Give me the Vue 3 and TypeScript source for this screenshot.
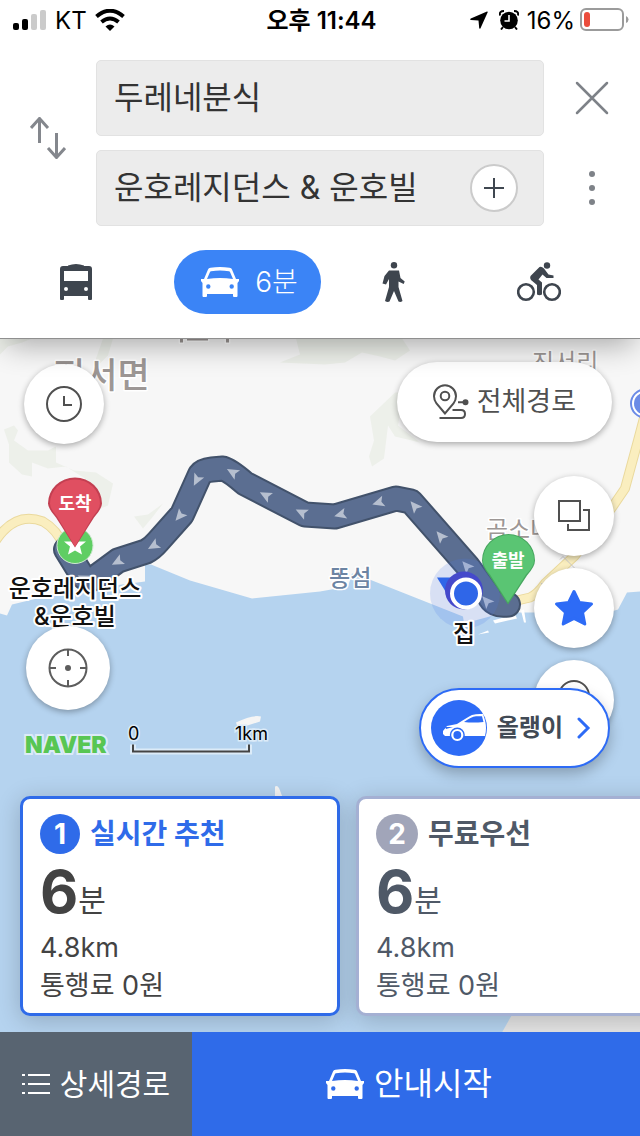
<script setup lang="ts">
import { ref } from 'vue'

interface RouteOption {
  id: number
  title: string
  minutes: number
  distance: string
  toll: string
}

interface Arrow {
  x: number
  y: number
  angle: number
}

const origin = ref('두레네분식')
const destination = ref('운호레지던스 & 운호빌')
const selected = ref(1)

const options: RouteOption[] = [
  { id: 1, title: '실시간 추천', minutes: 6, distance: '4.8km', toll: '통행료 0원' },
  { id: 2, title: '무료우선', minutes: 6, distance: '4.8km', toll: '통행료 0원' },
]

const routeLine =
  'M66 549L82 575Q90 583 99 574L118 560L146 551Q152 548 158 541L182 514L200 474Q203 470 212 469L223 468Q230 470 245 483L305 514L335 516L396 498L411 501L468 566L489 595Q493 606 508 604'

const roadLine =
  'M-6 543Q14 510 43 521Q57 529 64 546M500 604L530 597Q537 594 545 583L575 555L612 507L625 488L638 440L646 410'

const arrows: Arrow[] = [
  { x: 487, y: 601, angle: 228 },
  { x: 467, y: 566, angle: 228 },
  { x: 441, y: 536, angle: 230 },
  { x: 415, y: 506, angle: 230 },
  { x: 379, y: 502, angle: 163 },
  { x: 341, y: 514, angle: 165 },
  { x: 302, y: 512, angle: 206 },
  { x: 266, y: 495, angle: 208 },
  { x: 233, y: 472, angle: 210 },
  { x: 197, y: 479, angle: 117 },
  { x: 180, y: 515, angle: 130 },
  { x: 154, y: 545, angle: 150 },
  { x: 118, y: 561, angle: 152 },
  { x: 84, y: 578, angle: 205 },
]
</script>

<template>
  <div class="app">
    <header class="top">
      <div class="status">
        <div class="status-side">
          <svg width="34" height="22" viewBox="0 0 34 22" aria-hidden="true">
            <rect x="0" y="14" width="6" height="7" rx="2" />
            <rect x="9" y="10" width="6" height="11" rx="2" />
            <rect x="18" y="5" width="6" height="16" rx="2" fill="#cbcbcb" />
            <rect x="27" y="1" width="6" height="20" rx="2" fill="#cbcbcb" />
          </svg>
          <span>KT</span>
          <svg width="30" height="22" viewBox="0 0 30 22" aria-hidden="true">
            <g fill="none" stroke="#000" stroke-width="4">
              <path d="M1.500 7.500Q15 -4 28.500 7.500" />
              <path d="M6.500 13Q15 6 23.500 13" />
            </g>
            <path d="M10.500 17.500Q15 13.500 19.500 17.500L15 22Z" />
          </svg>
        </div>
        <strong>오후 11:44</strong>
        <div class="status-side right">
          <svg width="18" height="18" viewBox="0 0 18 18" aria-hidden="true">
            <path d="M17 .5Q18 .3 17.700 1.300L10.500 17.300Q9.600 18.500 9.200 17L8.500 9.500L1 9Q-.6 8.600.8 7.600Z" />
          </svg>
          <svg class="alarm" width="20" height="20" viewBox="0 0 20 20" aria-hidden="true">
            <circle cx="10" cy="10.500" r="8.800" />
            <path d="M1 5.500Q0 1 5 1M19 5.500Q20 1 15 1" fill="none" stroke="#000" stroke-width="2" />
            <path d="M4 17L2 19.500M16 17L18 19.500" stroke="#000" stroke-width="2" />
            <path d="M10 5V11H5.500" fill="none" stroke="#fff" stroke-width="1.600" />
          </svg>
          <span>16%</span>
          <svg width="50" height="24" viewBox="0 0 50 24" aria-hidden="true">
            <rect x="1" y="1" width="42" height="21" rx="5" fill="none" stroke="#9b9b9b" stroke-width="2" />
            <rect x="4" y="4" width="6" height="15" rx="3" fill="#eb4d3d" />
            <path d="M46 8Q48.500 9 48.500 11.500T46 15Z" fill="#9b9b9b" />
          </svg>
        </div>
      </div>

      <form class="search" @submit.prevent>
        <button class="bare swap" type="button" aria-label="출발지와 도착지 바꾸기">
          <svg width="36" height="42" viewBox="0 0 36 42" aria-hidden="true">
            <path d="M9.500 26V2M1 11L9.500 1.500L18 11M26.500 16V40M18 31L26.500 40.500L35 31" fill="none" stroke="#84878d" stroke-width="3" />
          </svg>
        </button>
        <div class="fields">
          <div class="field">
            <input v-model="origin" type="text" aria-label="출발지" />
          </div>
          <div class="field">
            <input v-model="destination" type="text" aria-label="도착지" />
            <button class="add" type="button" aria-label="경유지 추가">
              <svg width="20" height="20" viewBox="0 0 20 20" aria-hidden="true">
                <path d="M10 0V20M0 10H20" stroke="#3f4750" stroke-width="2" />
              </svg>
            </button>
          </div>
        </div>
        <div class="actions">
          <button class="bare" type="button" aria-label="닫기">
            <svg width="34" height="34" viewBox="0 0 34 34" aria-hidden="true">
              <path d="M2 2L32 32M32 2L2 32" stroke="#7e8288" stroke-width="2.500" stroke-linecap="round" />
            </svg>
          </button>
          <button class="bare" type="button" aria-label="더보기">
            <svg width="34" height="34" viewBox="0 0 34 34" fill="#7e8288" aria-hidden="true">
              <circle cx="17" cy="3" r="3" /><circle cx="17" cy="17" r="3" /><circle cx="17" cy="31" r="3" />
            </svg>
          </button>
        </div>
      </form>

      <nav class="modes" aria-label="이동 수단">
        <button class="bare" type="button" aria-label="대중교통">
          <svg width="32" height="36" viewBox="0 0 32 36" aria-hidden="true">
            <path fill="#3e454e" fill-rule="evenodd" d="M8 1.500Q16 -1.500 24 1.500V2H29Q32 2 32 5V35Q32 36 31 36H29Q28 36 28 35V32H4V35Q4 36 3 36H1Q0 36 0 35V5Q0 2 3 2H8ZM4 7V17H28V7ZM6 23a2 2 0 1 0 0 4 2 2 0 0 0 0-4ZM26 23a2 2 0 1 0 0 4 2 2 0 0 0 0-4Z" />
          </svg>
        </button>
        <button class="bare mode-active" type="button" aria-pressed="true">
          <svg width="38" height="30" viewBox="0 0 38 30" aria-hidden="true">
            <path fill="#fff" fill-rule="evenodd" d="M7 2.500Q7.500 1 9.500.8Q19 -.8 28.500.8Q30.500 1 31 2.500L35 12H38V14L36.500 16V29Q36.500 30 35.500 30H33Q32 30 32 29V27H6V29Q6 30 5 30H2.500Q1.500 30 1.500 29V16L0 14V12H3ZM10 4.200Q9.300 4.400 9 5L6 12Q19 10 32 12L29 5Q28.700 4.400 28 4.200Q19 2.800 10 4.200ZM7.300 17.300a2.200 2.200 0 1 0 0 4.400 2.200 2.200 0 0 0 0-4.400ZM30.700 17.300a2.200 2.200 0 1 0 0 4.400 2.200 2.200 0 0 0 0-4.400Z" />
          </svg>
          <span>6분</span>
        </button>
        <button class="bare" type="button" aria-label="도보">
          <svg width="24" height="40" viewBox="0 0 24 40" fill="#3e454e" aria-hidden="true">
            <circle cx="12" cy="3.200" r="3.200" />
            <path d="M7 8.500H17L18.500 16L22.700 19.500L21.700 22L16.500 19.500V25L20.500 39Q18.500 40.500 16.500 39.500L12 29L7.500 39.500Q5.500 40.500 3 39L7 25V17L4 22.500L.5 21.500L2.500 14Z" />
          </svg>
        </button>
        <button class="bare" type="button" aria-label="자전거">
          <svg width="44" height="40" viewBox="0 0 44 40" fill="#3e454e" aria-hidden="true">
            <circle cx="9" cy="30" r="7.800" fill="none" stroke="#3e454e" stroke-width="2.600" />
            <circle cx="35" cy="30" r="7.800" fill="none" stroke="#3e454e" stroke-width="2.600" />
            <circle cx="30" cy="3.500" r="3.200" />
            <path d="M22.500 5Q24.500 4 27 6.500L31.500 12.500L36.500 13.500V16H29.500L25.500 12.500L21.500 17.500L25 20.500V32.500Q22.500 34 20 32.500V23L14 18Q12.500 16 13.500 14Z" />
          </svg>
        </button>
      </nav>
    </header>

    <main class="map">
      <svg class="canvas" viewBox="0 338 640 694" preserveAspectRatio="xMidYMid slice" role="img" aria-label="경로 지도">
        <rect y="338" width="640" height="694" fill="#f7f7f7" />
        <g fill="#edf0ea">
          <path d="M0 338H32L22 342L8 346L0 354ZM103 338H113L108 355L97 366L96 358ZM280 362L300 354L296 338H402L410 350L395 360L380 356L362 352L345 362L325 364Z" />
          <path d="M4 429L14 425L18 430L14 440L28 450H48L56 446L56 462L74 470L96 472L113 483L108 505L96 510L85 478L66 466L48 468L32 462V476L22 474L9 462L9 444Z" />
          <path d="M134 516L148 514L163 503L153 516L143 528ZM370 416L395 392H404L398 425L420 442L395 436L388 425L384 458L372 466L369 456L374 440Z" />
        </g>
        <path fill="#b5d3ef" d="M0 613L7 615L12 604L62 592L145 581V564H151L190 580L252 598L320 591L348 586L352 573L362 576L463 616L464 623L486 617L504 612H608L618 609L627 592L640 591V1032H0Z" />
        <path fill="#e4e4e4" d="M520 1000H640V1032H502Z" />
        <path fill="#fff" d="M493 620L515 614L517 618L495 623ZM521 610L524 609L526 622H524ZM478 634L488 630L489 632Z" />
        <path fill="#f5f5f5" d="M236 722Q252 714 261 716L260 721L238 728ZM275 786Q278 784 280 790L283 798H275Z" />
        <g fill="none" stroke-linejoin="round">
          <path :d="roadLine" stroke="#ead99d" stroke-width="10" />
          <path :d="roadLine" stroke="#faeebf" stroke-width="8" />
        </g>
        <path d="M560 559L563 556L575 568M541 583L548 586" fill="none" stroke="#c9c9c9" stroke-width="1" />
        <circle cx="645" cy="403" r="14" fill="#fff" stroke="#6b8be6" stroke-width="2" />
        <circle cx="645" cy="403" r="11" fill="#6b8be6" />

        <g class="place">
          <path d="M180 338H183V342H180ZM187 338H208V340H187ZM226 338H229V342H226Z" />
          <text x="53" y="387" font-size="35">진서면</text>
          <text class="minor" x="532" y="370">진서리</text>
          <text class="minor" x="486" y="537">곰소나</text>
          <text class="island" x="329" y="585">똥섬</text>
        </g>

        <g fill="none" stroke-linejoin="round" stroke-linecap="round">
          <path :d="routeLine" stroke="#42526b" stroke-width="26" />
          <path :d="routeLine" stroke="#5b6e91" stroke-width="22" />
        </g>
        <path
          v-for="arrow in arrows"
          :key="`${arrow.x}-${arrow.y}`"
          d="M7 0L-5 5.500L-2.500 0L-5 -5.500Z"
          fill="#b6bfcf"
          :transform="`translate(${arrow.x} ${arrow.y}) rotate(${arrow.angle})`"
        />

        <circle cx="75" cy="545" r="18" fill="#5fce63" stroke="#cfe9d2" stroke-width="1" />
        <path d="M75 532L78 541L86 541L80 546L82 554L75 550L68 554L70 546L64 541L72 541Z" fill="#fff" />
        <path d="M75 547L56 517Q48 508 48 503A27 26 0 0 1 102 503Q102 508 94 517Z" fill="#c33f51" />
        <path d="M75 546L57 516Q50 508 50 503A25 24 0 0 1 100 503Q100 508 93 516Z" fill="#e04f61" />
        <text class="pin-label" x="75" y="509">도착</text>

        <circle cx="465" cy="593" r="35" fill="#4f7bea" fill-opacity=".18" />
        <path d="M437 577L462 577L448 595Z" fill="#2f66e8" />
        <circle cx="464" cy="590" r="19" fill="#4549cb" />
        <circle cx="466" cy="593" r="14" fill="#2f66e8" stroke="#fff" stroke-width="4" />
        <path d="M508 604L489 575Q482 566 482 560A26.500 26.500 0 0 1 535 560Q535 566 527 575Z" fill="#47a65f" />
        <path d="M508 602L490 574Q483 566 483 560A25 25 0 0 1 534 560Q534 566 526 574Z" fill="#5ac573" />
        <text class="pin-label" x="508" y="566">출발</text>

        <g class="place dark">
          <text x="75" y="596">운호레지던스</text>
          <text x="75" y="624">&amp;운호빌</text>
          <text x="464" y="641">집</text>
        </g>

        <text class="brand" x="25" y="752">NAVER</text>
        <g class="scale">
          <text x="128" y="739">0</text>
          <text x="235" y="739">1km</text>
        </g>
        <path d="M133 744V751H249V744" fill="none" stroke="#dcebf8" stroke-width="6" />
        <path d="M133 744V751H249V744" fill="none" stroke="#444" stroke-width="2" />
      </svg>

      <div class="controls">
        <div class="column">
          <button class="round" type="button" aria-label="출발 시간 설정">
            <svg width="36" height="36" viewBox="0 0 36 36" fill="none" stroke="#505050" stroke-width="2" aria-hidden="true">
              <circle cx="18" cy="18" r="17" /><path d="M18 10V19H26" />
            </svg>
          </button>
          <button class="round large" type="button" aria-label="현재 위치">
            <svg width="40" height="40" viewBox="0 0 40 40" aria-hidden="true">
              <circle cx="20" cy="20" r="18.500" fill="none" stroke="#5d5d5d" stroke-width="2" />
              <path d="M20 1V8M20 32V39M1 20H8M32 20H39" stroke="#5d5d5d" stroke-width="2" />
              <circle cx="20" cy="20" r="3" fill="#5d5d5d" />
            </svg>
          </button>
        </div>
        <div class="column end">
          <button class="overview" type="button">
            <svg width="36" height="36" viewBox="0 0 36 36" fill="none" stroke="#505050" stroke-width="2" aria-hidden="true">
              <path d="M12 29.500L3.500 19.500Q1 16 1 12.300A11 11 0 0 1 23 12.300Q23 16 20.500 19.500Z" />
              <circle cx="12" cy="12" r="4.300" />
              <path d="M19.500 26H28Q32 26 32 30T28 34H6.500M25 18.300H32" />
              <circle cx="32.500" cy="18.300" r="2" fill="#505050" />
            </svg>
            <span>전체경로</span>
          </button>
          <button class="round" type="button" aria-label="지도 레이어">
            <svg width="32" height="32" viewBox="0 0 32 32" fill="none" stroke="#505050" stroke-width="2" aria-hidden="true">
              <path d="M1 1H22V21H1ZM25 10H31V30H10V24" />
            </svg>
          </button>
          <button class="round" type="button" aria-label="즐겨찾기">
            <svg width="40" height="38" viewBox="0 0 40 38" aria-hidden="true">
              <path d="M20 2.500L25.300 13.500L37.500 15L28.500 23.300L30.800 35L20 29.300L9.200 35L11.500 23.300L2.500 15L14.700 13.500Z" fill="#2d6bf6" stroke="#2d6bf6" stroke-width="3" stroke-linejoin="round" />
            </svg>
          </button>
          <button class="round" type="button" aria-label="거리뷰">
            <svg width="40" height="40" viewBox="0 0 40 40" fill="none" stroke="#505050" stroke-width="2" aria-hidden="true">
              <circle cx="20" cy="16" r="15" />
            </svg>
          </button>
        </div>
      </div>

      <button class="vehicle" type="button">
        <svg width="56" height="56" viewBox="0 0 56 56" aria-hidden="true">
          <circle cx="28" cy="28" r="28" fill="#2d6bf6" />
          <path d="M12 31L16 26L26 24Q37 17 41 15Q46 13.500 52 14Q55 22 55 28Q55 32 54 36H14L12 34Z" fill="#fff" />
          <path d="M33 22Q40 17 45 16.300H51L52.500 22Q42 23 33 22ZM14 27H22L15 29Z" fill="#2d6bf6" />
          <circle cx="26.300" cy="35" r="7.500" fill="#2d6bf6" />
          <circle cx="26.300" cy="35" r="5" fill="#2d6bf6" stroke="#fff" stroke-width="2.200" />
        </svg>
        <span>올랭이</span>
        <svg class="chevron" width="14" height="22" viewBox="0 0 14 22" aria-hidden="true">
          <path d="M2 2L11 11L2 20" fill="none" stroke="#2d6bf6" stroke-width="3" stroke-linecap="round" />
        </svg>
      </button>

      <ul class="cards">
        <li v-for="option in options" :key="option.id">
          <button class="card" :class="{ chosen: selected === option.id }" type="button" @click="selected = option.id">
            <span class="card-head">
              <span class="badge">{{ option.id }}</span>
              <span class="card-title">{{ option.title }}</span>
            </span>
            <span class="duration"><b>{{ option.minutes }}</b><span class="unit">분</span></span>
            <span class="detail">{{ option.distance }}</span>
            <span class="detail">{{ option.toll }}</span>
          </button>
        </li>
      </ul>
    </main>

    <footer class="bottom">
      <button class="detail-btn" type="button">
        <svg width="28" height="22" viewBox="0 0 28 22" aria-hidden="true">
          <path d="M0 2H3M0 11H3M0 20H3M6 2H28M6 11H28M6 20H28" stroke="#fff" stroke-width="2" />
        </svg>
        <span>상세경로</span>
      </button>
      <button class="start-btn" type="button">
        <svg width="38" height="30" viewBox="0 0 38 30" aria-hidden="true">
          <path fill="#fff" fill-rule="evenodd" d="M7 2.500Q7.500 1 9.500.8Q19 -.8 28.500.8Q30.500 1 31 2.500L35 12H38V14L36.500 16V29Q36.500 30 35.500 30H33Q32 30 32 29V27H6V29Q6 30 5 30H2.500Q1.500 30 1.500 29V16L0 14V12H3ZM10 4.200Q9.300 4.400 9 5L6 12Q19 10 32 12L29 5Q28.700 4.400 28 4.200Q19 2.800 10 4.200ZM7.300 17.300a2.200 2.200 0 1 0 0 4.400 2.200 2.200 0 0 0 0-4.400ZM30.700 17.300a2.200 2.200 0 1 0 0 4.400 2.200 2.200 0 0 0 0-4.400Z" />
        </svg>
        <span>안내시작</span>
      </button>
    </footer>
  </div>
</template>

<style>
body {
  margin: 0;
}
</style>

<style scoped>
.app {
  display: flex;
  flex-direction: column;
  min-height: 100vh;
  overflow: hidden;
  background: #fff;
  font-family: Inter, 'Noto Sans CJK KR', sans-serif;
}

button,
input {
  font: inherit;
  margin: 0;
  padding: 0;
  border: 0;
}

button {
  cursor: pointer;
}

svg {
  display: block;
  flex: none;
}

.bare {
  display: flex;
  align-items: center;
  justify-content: center;
  background: none;
}

.top {
  position: relative;
  z-index: 1;
  padding-bottom: 24px;
  background: #fff;
  border-bottom: 1px solid #8f8f8f;
  box-shadow: 0 12px 28px -6px rgba(0, 0, 0, 0.32);
}

.status {
  display: grid;
  grid-template-columns: 1fr auto 1fr;
  align-items: center;
  height: 40px;
  padding: 0 10px 0 13px;
  font-size: 24px;
  line-height: 32px;
  color: #000;
}

.status strong,
.status span {
  padding-top: 2px;
}

.status strong {
  font-weight: 600;
}

.status-side {
  display: flex;
  align-items: center;
  gap: 8px;
}

.status-side.right {
  justify-content: flex-end;
  gap: 5px;
}

.alarm {
  margin: 0 3px 0 6px;
}

.search {
  display: grid;
  grid-template-columns: 96px minmax(0, 1fr) 96px;
  margin-top: 20px;
}

.swap {
  padding-bottom: 10px;
}

.fields {
  display: flex;
  flex-direction: column;
  gap: 14px;
}

.field {
  display: flex;
  align-items: center;
  height: 76px;
  box-sizing: border-box;
  padding: 0 25px 0 17px;
  border: 1px solid #e2e2e2;
  border-radius: 5px;
  background: #ececec;
}

.field input {
  flex: 1;
  min-width: 0;
  background: none;
  outline: none;
  font-size: 32px;
  line-height: 48px;
  color: #333;
}

.add {
  display: flex;
  flex: none;
  align-items: center;
  justify-content: center;
  width: 48px;
  height: 48px;
  border: 2px solid #cbcbcb;
  border-radius: 50%;
  background: #fff;
}

.actions {
  display: grid;
  grid-template-rows: 1fr 1fr;
  gap: 14px;
}

.modes {
  display: grid;
  grid-template-columns: 152fr 191fr 102fr 187fr 8fr;
  height: 64px;
  margin-top: 24px;
}

.mode-active {
  justify-self: center;
  gap: 16px;
  padding: 0 23px 0 27px;
  border-radius: 32px;
  background: #3b84f6;
  color: #fff;
  font-size: 28px;
  font-weight: 300;
  line-height: 40px;
}

.map {
  position: relative;
  flex: 1;
  display: flex;
  flex-direction: column;
  justify-content: space-between;
}

.canvas {
  position: absolute;
  inset: 0;
  width: 100%;
  height: 100%;
}

.place {
  font-weight: 500;
  fill: #9d9795;
  stroke: #fff;
  stroke-width: 3px;
  stroke-linejoin: round;
  paint-order: stroke;
}

.minor {
  font-size: 24px;
  font-weight: 400;
}

.island {
  font-size: 23px;
  fill: #6c84a3;
}

.dark {
  font-size: 24px;
  fill: #111;
  stroke-width: 4px;
  text-anchor: middle;
}

.pin-label {
  fill: #fff;
  font-size: 18px;
  font-weight: 700;
  text-anchor: middle;
}

.brand {
  font-size: 23px;
  font-weight: 900;
  fill: #58c653;
  stroke: #dcebf8;
  stroke-width: 4px;
  paint-order: stroke;
}

.scale {
  font-size: 18px;
  fill: #000;
  stroke: #dcebf8;
  stroke-width: 3px;
  paint-order: stroke;
}

.controls {
  position: relative;
  display: flex;
  justify-content: space-between;
  padding: 23px 26px 0 24px;
}

.column {
  display: flex;
  flex-direction: column;
  padding-top: 2px;
}

.round {
  display: flex;
  align-items: center;
  justify-content: center;
  width: 80px;
  height: 80px;
  border-radius: 50%;
  background: #fff;
  box-shadow: 0 2px 6px rgba(0, 0, 0, 0.32);
}

.large {
  width: 84px;
  height: 84px;
  margin: 182px 2px 0;
}

.end {
  align-items: flex-end;
  gap: 12px;
  padding-top: 0;
}

.overview {
  display: flex;
  align-items: center;
  gap: 8px;
  height: 80px;
  margin: 0 2px 22px;
  padding: 0 36px;
  border-radius: 40px;
  background: #fff;
  box-shadow: 0 2px 6px rgba(0, 0, 0, 0.32);
  color: #505050;
  font-size: 27px;
  line-height: 40px;
}

.vehicle {
  position: absolute;
  right: 30px;
  bottom: 264px;
  display: flex;
  align-items: center;
  gap: 10px;
  height: 80px;
  box-sizing: border-box;
  padding: 0 17px 0 10px;
  border: 2px solid #2d6bf6;
  border-radius: 40px;
  background: #fff;
  box-shadow: 0 6px 14px rgba(0, 0, 0, 0.25);
  color: #414a55;
  font-size: 24px;
  font-weight: 700;
  line-height: 40px;
}

.chevron {
  margin-left: 4px;
}

.cards {
  position: relative;
  display: flex;
  gap: 16px;
  margin: 0;
  padding: 0 20px 16px;
  list-style: none;
}

.card {
  display: flex;
  flex-direction: column;
  align-items: flex-start;
  width: 320px;
  height: 220px;
  box-sizing: border-box;
  padding: 15px 17px 0;
  border: 3px solid #a4b0d3;
  border-radius: 10px;
  background: #fff;
  box-shadow: 0 4px 24px rgba(0, 0, 0, 0.2);
  color: #4f5967;
  text-align: left;
}

.card.chosen {
  border-color: #2f6be9;
  color: #434343;
}

.card-head {
  display: flex;
  align-items: center;
  gap: 10px;
}

.badge {
  width: 42px;
  height: 40px;
  border-radius: 21px;
  background: #a1a5b9;
  color: #fff;
  font-size: 28px;
  font-weight: 700;
  line-height: 40px;
  text-align: center;
}

.chosen .badge {
  width: 40px;
  background: #2f6be9;
}

.card-title {
  font-size: 28px;
  font-weight: 700;
  line-height: 40px;
}

.chosen .card-title {
  color: #2f6be9;
}

.duration {
  height: 69px;
  margin-top: 6px;
  line-height: 64px;
}

.duration b {
  font-size: 59px;
  font-weight: 700;
}

.unit {
  font-size: 30px;
  vertical-align: 2px;
}

.detail {
  font-size: 27px;
  line-height: 38px;
}

.bottom {
  position: relative;
  display: grid;
  grid-template-columns: 3fr 7fr;
  height: 104px;
}

.bottom button {
  display: flex;
  align-items: center;
  justify-content: center;
  gap: 10px;
  color: #fff;
  line-height: 48px;
}

.bottom .detail-btn {
  background: #586471;
  font-size: 30px;
}

.bottom .start-btn {
  padding-right: 14px;
  background: #2f6be9;
  font-size: 32px;
}
</style>
